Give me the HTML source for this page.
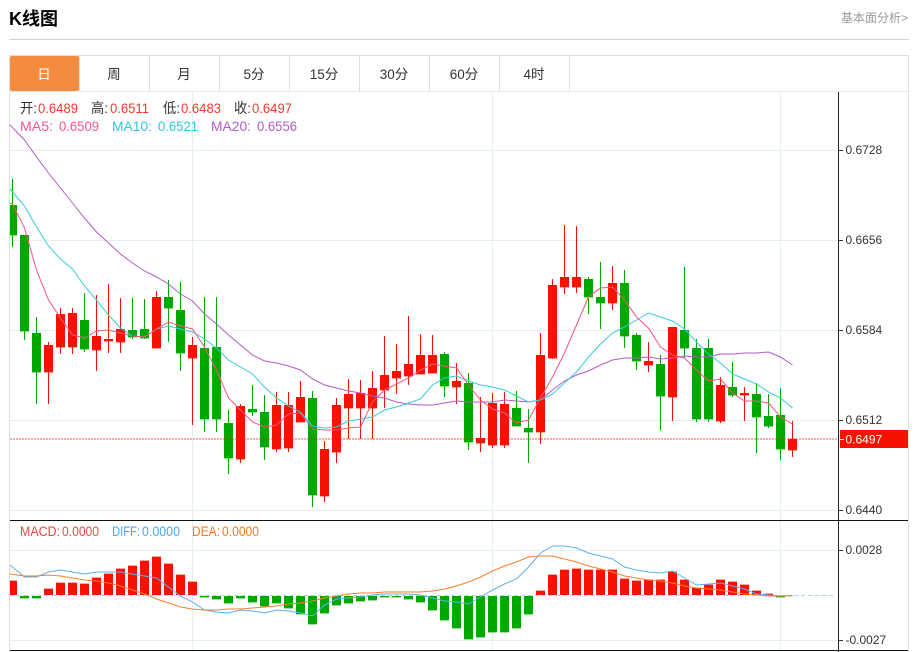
<!DOCTYPE html>
<html lang="zh"><head><meta charset="utf-8"><title>K线图</title>
<style>
html,body{margin:0;padding:0;background:#fff;width:916px;height:652px;overflow:hidden}
svg{display:block}
text{font-family:"Liberation Sans","Noto Sans CJK SC",sans-serif}
.tab{font-size:13.5px;fill:#333;text-anchor:middle}
.ax{font-size:12px;fill:#333}
.h{font-size:14px}
.c{font-size:13.5px}
</style></head><body>
<svg width="916" height="652" viewBox="0 0 916 652" xmlns="http://www.w3.org/2000/svg">
<text x="9" y="25" font-size="18" font-weight="700" fill="#000">K线图</text>
<text x="841" y="22" font-size="12" fill="#999" textLength="67">基本面分析&gt;</text>
<path d="M9 39.5H909" stroke="#d2d2d2" fill="none"/>
<path d="M9.5 55.5H908.5M9.5 55V652M908.5 55V652M79.5 56V91M149.5 56V91M219.5 56V91M289.5 56V91M359.5 56V91M429.5 56V91M499.5 56V91M569.5 56V91" stroke="#dedede" fill="none"/>
<path d="M10 91.5H908" stroke="#e2e7ea" fill="none"/>
<rect x="10" y="56" width="69" height="35" rx="2" fill="#f58b3f"/>
<text class="tab" x="44" y="79" style="fill:#fff">日</text>
<text class="tab" x="114" y="79">周</text>
<text class="tab" x="184" y="79">月</text>
<text class="tab" x="254" y="79">5分</text>
<text class="tab" x="324" y="79">15分</text>
<text class="tab" x="394" y="79">30分</text>
<text class="tab" x="464" y="79">60分</text>
<text class="tab" x="534" y="79">4时</text>

<!-- grid -->
<path d="M10 150.5H838M10 240.5H838M10 330.5H838M10 420.5H838M10 510.5H838M10 550.5H838M10 640.5H838M192.5 92V520M492.5 92V520M780.5 92V520M192.5 521V650M492.5 521V650M780.5 521V650" stroke="#e3edf4" fill="none"/>

<!-- green wicks -->
<path fill="none" stroke="#00a800" d="M12.5 179V247M24.5 235V340M36.5 317V404M84.5 293V352M132.5 298V339M144.5 299V339M168.5 280V342M180.5 282V371M204.5 297V432M216.5 297V432M228.5 410V474M252.5 385V416M264.5 395V460M312.5 391V507M444.5 352V397M468.5 373V450M516.5 391V426M528.5 409V463M588.5 277V314M600.5 262V329M624.5 270V348M636.5 333V370M660.5 355V430M684.5 267V358M696.5 339V422M708.5 339V422M732.5 362V397M756.5 383V453M768.5 394V428M780.5 388V460"/>
<!-- red wicks -->
<path fill="none" stroke="#f51300" d="M48.5 342V404M60.5 308V354M72.5 308V354M96.5 295V371M108.5 284V353M120.5 298V353M156.5 291V348M192.5 337V425M240.5 404V463M276.5 392V452M288.5 392V452M300.5 381V422M324.5 441V502M336.5 398V463M348.5 379V439M360.5 380V439M372.5 371V439M384.5 336V408M396.5 344V394M408.5 316V385M420.5 334V374M432.5 335V373M456.5 363V404M480.5 397V452M492.5 393V448M504.5 392V448M540.5 333V444M552.5 279V359M564.5 225V294M576.5 226V293M612.5 266V310M648.5 342V372M672.5 327V421M720.5 377V423M744.5 387V421M792.5 421V457"/>
<!-- green bodies -->
<path id="gb" fill="#00a800" d="M10 205h7v30h-7zM20 235h9v96h-9zM32 333h9v39h-9zM80 320h9v29h-9zM128 330h9v7h-9zM140 329h9v9h-9zM164 297h9v11h-9zM176 310h9v43h-9zM200 348h9v71h-9zM212 347h9v72h-9zM224 423h9v35h-9zM248 409h9v3h-9zM260 412h9v35h-9zM308 398h9v97h-9zM440 354h9v32h-9zM464 383h9v59h-9zM512 408h9v18h-9zM524 428h9v4h-9zM584 279h9v18h-9zM596 297h9v6h-9zM620 283h9v53h-9zM632 335h9v26h-9zM656 364h9v32h-9zM680 330h9v18h-9zM692 348h9v71h-9zM704 348h9v71h-9zM728 387h9v8h-9zM752 394h9v23h-9zM764 416h9v10h-9zM776 415h9v34h-9z"/>
<use href="#gb" transform="translate(0,.4)"/>
<!-- red bodies -->
<path id="rb" fill="#f51300" d="M44 345h9v27h-9zM56 314h9v33h-9zM68 313h9v34h-9zM92 336h9v14h-9zM104 339h9v2h-9zM116 329h9v13h-9zM152 297h9v51h-9zM188 345h9v13h-9zM236 406h9v53h-9zM272 405h9v44h-9zM284 405h9v43h-9zM296 397h9v25h-9zM320 449h9v47h-9zM332 405h9v47h-9zM344 394h9v14h-9zM356 393h9v15h-9zM368 388h9v20h-9zM380 375h9v15h-9zM392 371h9v7h-9zM404 364h9v12h-9zM416 355h9v19h-9zM428 355h9v18h-9zM452 381h9v6h-9zM476 438h9v5h-9zM488 403h9v42h-9zM500 404h9v41h-9zM536 355h9v77h-9zM548 285h9v73h-9zM560 277h9v10h-9zM572 277h9v10h-9zM608 283h9v20h-9zM644 361h9v4h-9zM668 327h9v70h-9zM716 385h9v36h-9zM740 393h9v2h-9zM788 439h9v11h-9z"/>
<use href="#rb" transform="translate(0,.4)"/>

<!-- last price dotted -->
<path d="M10 439H838" stroke="#f51300" stroke-opacity=".7" stroke-dasharray="2 1" fill="none"/>

<!-- MA lines -->
<polyline fill="none" stroke="#b35cc6" points="10,125 24.5,140 36.5,157 48.5,173 60.5,188 72.5,203 84.5,218 96.5,232 108.5,243 120.5,254 132.5,263 144.5,271 156.5,277 168.5,284 180.5,294 192.5,301 204.5,314 216.5,324 228.5,335 240.5,345 252.5,355 264.5,361 276.5,363 288.5,366 300.5,370 312.5,379 324.5,385 336.5,388 348.5,391 360.5,393 372.5,396 384.5,398 396.5,402 408.5,404 420.5,405 432.5,405 444.5,403 456.5,401 468.5,402 480.5,402 492.5,402 504.5,400 516.5,401 528.5,402 540.5,400 552.5,390 564.5,381 576.5,375 588.5,371 600.5,365 612.5,360 624.5,358 636.5,358 648.5,357 660.5,359 672.5,358 684.5,356 696.5,357 708.5,357 720.5,354 732.5,354 744.5,353 756.5,353 768.5,352 780.5,357 792.5,365"/>
<polyline fill="none" stroke="#35cbe0" points="10,189 24.5,206 36.5,227 48.5,246 60.5,259 72.5,269 84.5,286 96.5,300 108.5,315 120.5,328 132.5,336 144.5,337 156.5,329 168.5,326 180.5,329 192.5,332 204.5,339 216.5,348 228.5,360 240.5,367 252.5,374 264.5,387 276.5,398 288.5,406 300.5,412 312.5,426 324.5,428 336.5,427 348.5,421 360.5,419 372.5,417 384.5,410 396.5,407 408.5,403 420.5,399 432.5,385 444.5,378 456.5,376 468.5,381 480.5,385 492.5,387 504.5,390 516.5,396 528.5,402 540.5,400 552.5,394 564.5,383 576.5,372 588.5,357 600.5,344 612.5,333 624.5,327 636.5,320 648.5,313 660.5,317 672.5,321 684.5,329 696.5,342 708.5,354 720.5,363 732.5,374 744.5,379 756.5,384 768.5,392 780.5,398 792.5,408"/>
<polyline fill="none" stroke="#f5557f" points="10,203 12.5,204 24.5,228 36.5,270 48.5,300 60.5,318 72.5,335 84.5,338 96.5,331 108.5,330 120.5,333 132.5,336 144.5,337 156.5,329 168.5,322 180.5,326 192.5,329 204.5,347 216.5,370 228.5,398 240.5,410 252.5,422 264.5,427 276.5,425 288.5,414 300.5,413 312.5,429 324.5,430 336.5,430 348.5,428 360.5,427 372.5,402 384.5,390 396.5,384 408.5,378 420.5,370 432.5,364 444.5,366 456.5,368 468.5,385 480.5,400 492.5,409 504.5,413 516.5,423 528.5,420 540.5,398 552.5,377 564.5,353 576.5,325 588.5,297 600.5,288 612.5,287 624.5,300 636.5,317 648.5,328 660.5,347 672.5,355 684.5,358 696.5,370 708.5,381 720.5,379 732.5,393 744.5,401 756.5,401 768.5,403 780.5,417 792.5,424"/>

<!-- MACD bars -->
<path id="rm" fill="#f51300" d="M10 581h7v14h-7zM44 589h9v6h-9zM56 583h9v12h-9zM68 583h9v12h-9zM80 584h9v11h-9zM92 578h9v17h-9zM104 574h9v21h-9zM116 569h9v26h-9zM128 566h9v29h-9zM140 561h9v34h-9zM152 557h9v38h-9zM164 564h9v31h-9zM176 575h9v20h-9zM188 582h9v13h-9zM536 591h9v4h-9zM548 575h9v20h-9zM560 570h9v25h-9zM572 569h9v26h-9zM584 570h9v25h-9zM596 570h9v25h-9zM608 570h9v25h-9zM620 579h9v16h-9zM632 581h9v14h-9zM644 580h9v15h-9zM656 580h9v15h-9zM668 572h9v23h-9zM680 580h9v15h-9zM692 588h9v7h-9zM704 585h9v10h-9zM716 580h9v15h-9zM728 582h9v13h-9zM740 585h9v10h-9zM752 591h9v4h-9zM764 594h9v1h-9z"/>
<use href="#rm" transform="translate(0,-.4)"/>
<path id="gm" fill="#00a800" d="M20 596h9v2h-9zM32 596h9v2h-9zM200 596h9v1h-9zM212 596h9v3h-9zM224 596h9v7h-9zM236 596h9v2h-9zM248 596h9v6h-9zM260 596h9v10h-9zM272 596h9v7h-9zM284 596h9v12h-9zM296 596h9v18h-9zM308 596h9v28h-9zM320 596h9v17h-9zM332 596h9v9h-9zM344 596h9v7h-9zM356 596h9v5h-9zM368 596h9v4h-9zM380 596h9v1h-9zM392 596h9v1h-9zM404 596h9v3h-9zM416 596h9v6h-9zM428 596h9v14h-9zM440 596h9v24h-9zM452 596h9v32h-9zM464 596h9v43h-9zM476 596h9v41h-9zM488 596h9v36h-9zM500 596h9v36h-9zM512 596h9v32h-9zM524 596h9v18h-9zM776 596h9v1h-9z"/>
<use href="#gm" transform="translate(0,.4)"/>
<path d="M10 595.5H836" stroke="#a8dcf0" stroke-dasharray="4 3" fill="none"/>
<polyline fill="none" stroke="#5eb0f0" points="10,565 24.5,577 36.5,577 48.5,572 60.5,570 72.5,572 84.5,574 96.5,572 108.5,572 120.5,572 132.5,574 144.5,576 156.5,578 168.5,587 180.5,596 192.5,602 204.5,610 216.5,612 228.5,613 240.5,610 252.5,611 264.5,613 276.5,610 288.5,611 300.5,613 312.5,616 324.5,605 336.5,599 348.5,598 360.5,597 372.5,595 384.5,594 396.5,594 408.5,594 420.5,595 432.5,598 444.5,601 456.5,602 468.5,604 480.5,597 492.5,590 504.5,584 516.5,579 528.5,567 540.5,553 552.5,546 564.5,546 576.5,548 588.5,553 600.5,556 612.5,559 624.5,567 636.5,570 648.5,572 660.5,573 672.5,571 684.5,578 696.5,585 708.5,584 720.5,583 732.5,586 744.5,589 756.5,594 768.5,595 780.5,596 792.5,595.5"/>
<polyline fill="none" stroke="#f9802a" points="10,574 24.5,576 36.5,576 48.5,575 60.5,576 72.5,578 84.5,580 96.5,581 108.5,583 120.5,586 132.5,590 144.5,594 156.5,599 168.5,603 180.5,607 192.5,609 204.5,610 216.5,610 228.5,609 240.5,609 252.5,608 264.5,607 276.5,606 288.5,604 300.5,603 312.5,601 324.5,598 336.5,596 348.5,594 360.5,593 372.5,593 384.5,592 396.5,592 408.5,592 420.5,592 432.5,591 444.5,589 456.5,586 468.5,582 480.5,577 492.5,571 504.5,566 516.5,562 528.5,557 540.5,556 552.5,556 564.5,559 576.5,562 588.5,566 600.5,569 612.5,572 624.5,576 636.5,578 648.5,580 660.5,581 672.5,583 684.5,586 696.5,588 708.5,589 720.5,590 732.5,592 744.5,594 756.5,595 768.5,596 780.5,596 792.5,596"/>

<!-- panel lines & axis -->
<path d="M10 520.5H908M10 650.5H908" stroke="#111" fill="none"/>
<path d="M838.5 92V652" stroke="#222" fill="none"/>
<path d="M839 150.5h4M839 240.5h4M839 330.5h4M839 420.5h4M839 510.5h4M839 550.5h4M839 640.5h4" stroke="#333" fill="none"/>
<text class="ax" x="845.5" y="154">0.6728</text>
<text class="ax" x="845.5" y="244">0.6656</text>
<text class="ax" x="845.5" y="334">0.6584</text>
<text class="ax" x="845.5" y="424">0.6512</text>
<text class="ax" x="845.5" y="514">0.6440</text>
<text class="ax" x="845.5" y="554">0.0028</text>
<text class="ax" x="845.5" y="644">-0.0027</text>
<rect x="840" y="430" width="68" height="18" fill="#f51300"/>
<path d="M840 439.5h4" stroke="#fff" fill="none"/>
<text class="ax" x="845.5" y="443.5" style="fill:#fff">0.6497</text>

<!-- legends -->
<text class="h" x="20" y="113" fill="#333" lengthAdjust="spacingAndGlyphs" textLength="17">开:</text><text class="h" x="38" y="113" fill="#f5392e" lengthAdjust="spacingAndGlyphs" textLength="40">0.6489</text>
<text class="h" x="91" y="113" fill="#333" lengthAdjust="spacingAndGlyphs" textLength="17">高:</text><text class="h" x="110" y="113" fill="#f5392e" lengthAdjust="spacingAndGlyphs" textLength="39">0.6511</text>
<text class="h" x="163" y="113" fill="#333" lengthAdjust="spacingAndGlyphs" textLength="17">低:</text><text class="h" x="181" y="113" fill="#f5392e" lengthAdjust="spacingAndGlyphs" textLength="40">0.6483</text>
<text class="h" x="234" y="113" fill="#333" lengthAdjust="spacingAndGlyphs" textLength="17">收:</text><text class="h" x="252" y="113" fill="#f5392e" lengthAdjust="spacingAndGlyphs" textLength="40">0.6497</text>
<text class="h" x="20" y="131" fill="#f4588a" lengthAdjust="spacingAndGlyphs" textLength="33">MA5:</text><text class="h" x="59" y="131" fill="#f4588a" lengthAdjust="spacingAndGlyphs" textLength="40">0.6509</text>
<text class="h" x="112" y="131" fill="#2ec7dc" lengthAdjust="spacingAndGlyphs" textLength="40">MA10:</text><text class="h" x="158" y="131" fill="#2ec7dc" lengthAdjust="spacingAndGlyphs" textLength="40">0.6521</text>
<text class="h" x="211" y="131" fill="#b35cc6" lengthAdjust="spacingAndGlyphs" textLength="40">MA20:</text><text class="h" x="257" y="131" fill="#b35cc6" lengthAdjust="spacingAndGlyphs" textLength="40">0.6556</text>
<text class="c" x="20" y="536" fill="#f04545" lengthAdjust="spacingAndGlyphs" textLength="40">MACD:</text><text class="c" x="62" y="536" fill="#f04545" lengthAdjust="spacingAndGlyphs" textLength="37">0.0000</text>
<text class="c" x="112" y="536" fill="#4da6f0" lengthAdjust="spacingAndGlyphs" textLength="28">DIFF:</text><text class="c" x="142" y="536" fill="#4da6f0" lengthAdjust="spacingAndGlyphs" textLength="38">0.0000</text>
<text class="c" x="192" y="536" fill="#f97a1e" lengthAdjust="spacingAndGlyphs" textLength="28">DEA:</text><text class="c" x="222" y="536" fill="#f97a1e" lengthAdjust="spacingAndGlyphs" textLength="37">0.0000</text>
</svg>
</body></html>
